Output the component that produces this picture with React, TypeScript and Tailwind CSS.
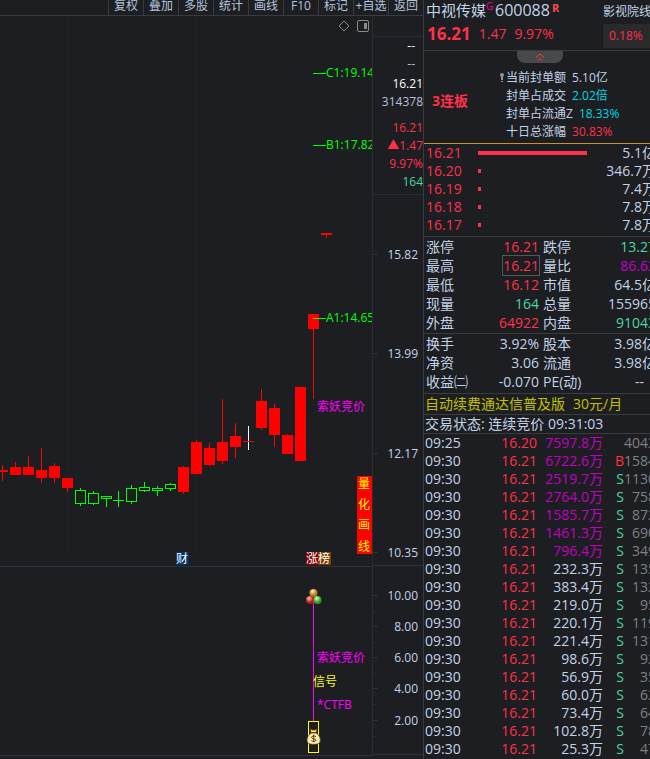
import clsx from 'clsx';

interface Candle {
  x: number;
  top: number;
  bottom: number;
  high: number;
  low: number;
  kind: 'up' | 'down' | 'flat';
}

const toolbar = ['复权', '叠加', '多股', '统计', '画线', 'F10', '标记', '+自选', '返回'];

const c = (x: number, top: number, bottom: number, high: number, low: number, kind: Candle['kind'] = 'up'): Candle => ({
  x, top, bottom, high, low, kind,
});

// y values are measured from the top of the price pane
const candles: Candle[] = [
  c(-3, 454, 456, 449, 465),
  c(10, 451, 459, 446, 459),
  c(23, 451, 459, 440, 459),
  c(36, 454, 462, 432, 467),
  c(49, 450, 462, 447, 467),
  c(62, 462, 472, 462, 476),
  c(75, 474, 488, 472, 490, 'down'),
  c(88, 477, 488, 475, 489, 'down'),
  c(101, 480, 483, 480, 491, 'down'),
  c(113, 484, 485, 475, 491, 'down'),
  c(126, 472, 486, 469, 488, 'down'),
  c(139, 471, 475, 466, 476, 'down'),
  c(152, 472, 475, 470, 480, 'down'),
  c(165, 468, 473, 467, 475, 'down'),
  c(178, 451, 476, 450, 478),
  c(191, 426, 458, 424, 458),
  c(204, 432, 449, 427, 450),
  c(217, 426, 445, 383, 448),
  c(230, 420, 431, 407, 442),
  c(243, 425, 426, 410, 434, 'flat'),
  c(256, 385, 412, 373, 414),
  c(269, 392, 419, 388, 431),
  c(282, 419, 438, 418, 438),
  c(295, 371, 445, 371, 445),
  c(308, 298, 313, 298, 383),
  c(321, 217, 219, 217, 222),
];

const priceTicks = [
  { y: 239, label: '15.82' },
  { y: 338, label: '13.99' },
  { y: 438, label: '12.17' },
  { y: 537, label: '10.35' },
];

const subTicks = [
  { y: 29, label: '10.00' },
  { y: 60, label: '8.00' },
  { y: 91, label: '6.00' },
  { y: 122, label: '4.00' },
  { y: 154, label: '2.00' },
];

const marks = [
  { y: 57, label: 'C1:19.14' },
  { y: 129, label: 'B1:17.82' },
  { y: 302, label: 'A1:14.65' },
];

const sealInfo = [
  { label: '当前封单额', value: '5.10亿', color: 'text-[#c3d3e6]' },
  { label: '封单占成交', value: '2.02倍', color: 'text-[#00d8e0]' },
  { label: '封单占流通Z', value: '18.33%', color: 'text-[#00d8e0]' },
  { label: '十日总涨幅', value: '30.83%', color: 'text-[#ff304a]' },
];

const depth = [
  { price: '16.21', size: 109, volume: '5.1亿' },
  { price: '16.20', size: 3, volume: '346.7万' },
  { price: '16.19', size: 3, volume: '7.4万' },
  { price: '16.18', size: 3, volume: '7.8万' },
  { price: '16.17', size: 3, volume: '7.8万' },
];

const RED = 'text-[#ff304a]';
const GREEN = 'text-[#4bd6a0]';
const PURPLE = 'text-[#c000c0]';
const PLAIN = 'text-[#c3d3e6]';

const quotes = [
  ['涨停', '16.21', RED, '跌停', '13.27', GREEN],
  ['最高', '16.21', RED, '量比', '86.62', PURPLE],
  ['最低', '16.12', RED, '市值', '64.5亿', PLAIN],
  ['现量', '164', GREEN, '总量', '155965', PLAIN],
  ['外盘', '64922', RED, '内盘', '91043', GREEN],
];

const finance = [
  ['换手', '3.92%', PLAIN, '股本', '3.98亿', PLAIN],
  ['净资', '3.06', PLAIN, '流通', '3.98亿', PLAIN],
  ['收益㈡', '-0.070', PLAIN, 'PE(动)', '--', PLAIN],
];

const ticks = [
  ['09:25', '16.20', '7597.8万', '', '4043'],
  ['09:30', '16.21', '6722.6万', 'B', '1584'],
  ['09:30', '16.21', '2519.7万', 'S', '1130'],
  ['09:30', '16.21', '2764.0万', 'S', '758'],
  ['09:30', '16.21', '1585.7万', 'S', '872'],
  ['09:30', '16.21', '1461.3万', 'S', '690'],
  ['09:30', '16.21', '796.4万', 'S', '349'],
  ['09:30', '16.21', '232.3万', 'S', '135'],
  ['09:30', '16.21', '383.4万', 'S', '132'],
  ['09:30', '16.21', '219.0万', 'S', '95'],
  ['09:30', '16.21', '220.1万', 'S', '119'],
  ['09:30', '16.21', '221.4万', 'S', '131'],
  ['09:30', '16.21', '98.6万', 'S', '92'],
  ['09:30', '16.21', '56.9万', 'S', '35'],
  ['09:30', '16.21', '60.0万', 'S', '62'],
  ['09:30', '16.21', '73.4万', 'S', '64'],
  ['09:30', '16.21', '102.8万', 'S', '78'],
  ['09:30', '16.21', '25.3万', 'S', '47'],
];

function CandleShape({ x, top, bottom, high, low, kind }: Candle) {
  const mid = x + 5;
  if (kind === 'down') {
    const h = bottom - top;
    return (
      <g fill="#00ff00">
        {high < top && <rect x={mid} y={high} width="1" height={top - high} />}
        {low > bottom && <rect x={mid} y={bottom} width="1" height={low - bottom} />}
        {h > 1 ? (
          <rect x={x + 0.5} y={top + 0.5} width="10" height={h - 1} fill="none" stroke="#00ff00" />
        ) : (
          <rect x={x} y={top} width="11" height="1" />
        )}
      </g>
    );
  }
  return (
    <g fill="#ff0000">
      <rect x={mid} y={high} width="1" height={low - high} fill={kind === 'flat' ? '#ffffff' : '#ff0000'} />
      <rect x={x} y={top} width="11" height={bottom - top} />
    </g>
  );
}

function PricePane() {
  return (
    <div className="relative border-b border-[#303137]">
      <svg className="block h-[550px] w-full" fontSize="12" shapeRendering="crispEdges">
        {[67, 196].map((x) => (
          <line key={x} x1={x + 0.5} x2={x + 0.5} y1="2" y2="536" stroke="#2c2d32" strokeDasharray="1 3" />
        ))}
        {candles.map((candle) => (
          <CandleShape key={candle.x} {...candle} />
        ))}
        {marks.map((m) => (
          <g key={m.label} fill="#00ff00">
            <rect x="313" y={m.y} width="13" height="1" />
            <text x="326" y={m.y + 4}>{m.label}</text>
          </g>
        ))}
        <text x="317" y="395" fill="#ff00ff">索妖竞价</text>

        <rect x="357" y="460" width="15" height="78" fill="#ff0000" />
        <g fill="#ffff00">
          <text x="358" y="472">量</text>
          <text x="358" y="493">化</text>
          <text x="358" y="513">画</text>
          <text x="358" y="535">线</text>
        </g>

        <rect x="176" y="536" width="13" height="13" fill="#003366" />
        <rect x="306" y="536" width="12" height="13" fill="#800000" />
        <rect x="318" y="536" width="13" height="13" fill="#804000" />
        <g fill="#ffffff">
          <text x="176" y="547">财</text>
          <text x="306" y="547">涨</text>
          <text x="318" y="547">榜</text>
        </g>
      </svg>
      <div className="absolute right-[3px] top-1 flex gap-[7px] text-[#8a8a8a]">
        <button aria-label="指标" type="button">
          <svg width="12" height="12" fill="none" stroke="currentColor">
            <path d="M6 1 11 6 6 11 1 6Z" />
          </svg>
        </button>
        <button aria-label="侧栏" type="button">
          <svg width="12" height="12" fill="none" stroke="currentColor">
            <rect x="0.5" y="0.5" width="11" height="11" rx="1.5" />
            <rect x="7" y="3" width="3" height="6" fill="currentColor" stroke="none" />
          </svg>
        </button>
      </div>
    </div>
  );
}

function SignalPane() {
  return (
    <div className="border-b border-[#303137]">
      <svg className="block h-[188px] w-full" fontSize="12">
        <defs>
          <radialGradient id="gold" cx="0.4" cy="0.3">
            <stop offset="0" stopColor="#fff3c0" />
            <stop offset="1" stopColor="#b07a10" />
          </radialGradient>
          <radialGradient id="red" cx="0.4" cy="0.3">
            <stop offset="0" stopColor="#ffc0b0" />
            <stop offset="1" stopColor="#b81c10" />
          </radialGradient>
          <radialGradient id="green" cx="0.4" cy="0.3">
            <stop offset="0" stopColor="#d8ffc8" />
            <stop offset="1" stopColor="#30a018" />
          </radialGradient>
        </defs>
        <rect x="313" y="34" width="1" height="120" fill="#ff00ff" />
        <circle cx="313.5" cy="26" r="4" fill="url(#gold)" />
        <circle cx="310" cy="33" r="4" fill="url(#red)" />
        <circle cx="317.5" cy="33" r="4" fill="url(#green)" />
        <text x="317" y="95" fill="#ff00ff">索妖竞价</text>
        <text x="313" y="119" fill="#ffff00">信号</text>
        <text x="317" y="142" fill="#ff00ff">*CTFB</text>
        <rect x="308.5" y="154.5" width="10" height="31" fill="none" stroke="#ffff00" />
        <path d="M310.500 162 312.500 163 315 163 317 162 316 166 311 166Z" fill="#ffe040" stroke="#5a3510" strokeWidth="0.5" />
        <path
          d="M311.500 166h4.500C318.500 167.500 320.300 170 320.300 173C320.300 176.300 318 177.300 313.700 177.300C309.300 177.300 307 176.300 307 173C307 170 309 167.500 311.500 166Z"
          fill="#fdf0b0"
          stroke="#6a4018"
          strokeWidth="0.8"
        />
        <path d="M311 165.500h5.500" stroke="#a02810" />
        <path d="M316 169.700c-1-1.200-4.500-1-4.500.6s4.500 1.200 4.500 2.900-3.500 1.700-4.700.4M313.700 167.800v7.400" fill="none" stroke="#5a3510" />
      </svg>
    </div>
  );
}

function AxisColumn() {
  return (
    <div className="w-[51px] shrink-0 border-l border-[#2b2c33]">
      <div className="mt-5 border-y border-[#2b2c33] pb-[3px] text-right text-xs leading-[18px]">
        <p className="pr-2 text-white">--</p>
        <p className="pr-2 text-[#b4c4da]">--</p>
        <div className="mt-0.5">
          <p className="text-white">16.21</p>
          <p className="text-[#b4c4da]">314378</p>
        </div>
        <div className="mt-2 text-[#ff304a]">
          <p>16.21</p>
          <p>▲1.47</p>
          <p>9.97%</p>
          <p className="text-[#4bd6a0]">164</p>
        </div>
      </div>
      <svg className="block h-[371px] w-full" fontSize="12" viewBox="0 180 50 371" preserveAspectRatio="xMinYMin">
        {priceTicks.map((t) => (
          <g key={t.label}>
            <rect x="0" y={t.y} width="5" height="1" fill="#303137" />
            <text x="45" y={t.y + 5} textAnchor="end" fill="#c3d3e6">{t.label}</text>
          </g>
        ))}
        <rect x="0" y="550" width="50" height="1" fill="#303137" />
      </svg>
      <div className="border-b border-[#303137]">
        <svg className="block h-[188px] w-full" fontSize="12">
          {subTicks.map((t) => (
            <g key={t.label}>
              <rect x="0" y={t.y} width="5" height="1" fill="#303137" />
              <rect x="0" y={t.y + 16} width="2" height="1" fill="#303137" />
              <text x="45" y={t.y + 5} textAnchor="end" fill="#c3d3e6">{t.label}</text>
            </g>
          ))}
        </svg>
      </div>
    </div>
  );
}

function StatRows({ rows }: { rows: string[][] }) {
  return (
    <dl>
      {rows.map(([l1, v1, c1, l2, v2, c2]) => (
        <div key={l1} className="flex h-[19px] gap-1 pl-0.5">
          <div className="flex w-[113px] justify-between">
            <dt>{l1}</dt>
            <dd className={clsx(c1, l1 === '最高' && 'outline outline-[#55565a]')}>{v1}</dd>
          </div>
          <div className="flex flex-1 justify-between">
            <dt>{l2}</dt>
            <dd className={clsx(c2, v2 === '--' && 'pr-3')}>{v2}</dd>
          </div>
        </div>
      ))}
    </dl>
  );
}

function QuotePanel() {
  return (
    <aside className="w-[227px] shrink-0 overflow-hidden border-l border-[#3a3b3f] text-sm text-[#c3d3e6]">
      {/* the panel is wider than its slot, the right edge is cut off */}
      <div className="w-[232px]">
        <header className="flex h-[51px] justify-between border-b border-[#3a3b3f]">
          <div className="pl-0.5">
            <h1 className="flex h-5 items-start text-base leading-5">
              <span className="text-[15px]">中视传媒</span>
              <sup className="top-0 w-[9px] text-[10px] leading-3 text-[#e0108c]">G</sup>
              <span>600088</span>
              <span className="pl-0.5 text-[11px] font-bold leading-4 text-[#ff4a4a]">R</span>
            </h1>
            <p className="flex items-center gap-2 pl-px pt-1 leading-5 text-[#ff304a]">
              <b className="text-[17px]">16.21</b>
              <span>1.47</span>
              <span>9.97%</span>
            </p>
          </div>
          <div className="w-[53px] text-xs">
            <p className="h-6 whitespace-nowrap leading-6">影视院线</p>
            <p className="h-6 bg-[#2a2a2c] pl-1.5 leading-6 text-[#ff304a]">0.18%</p>
          </div>
        </header>

        <section className="border-b border-[#c8922e] pb-0.5">
          <button
            type="button"
            aria-label="收起"
            className="mx-auto flex h-3 w-[46px] items-center justify-center rounded-b-lg bg-[#48494b]"
          >
            <svg width="10" height="8" fill="none" stroke="#ff4040">
              <path d="M1 4.500 5 1l4 3.500M3 7.500 5 5.500l2 2" />
            </svg>
          </button>
          <div className="flex items-center pt-1.5">
            <strong className="mb-2 w-[74px] pl-2 text-sm text-[#ff304a]">3连板</strong>
            <svg width="8" height="72" className="shrink-0" fill="#8f9296">
              <circle cx="4" cy="6" r="2" />
              <rect x="3" y="6" width="2" height="5" />
              <rect x="3" y="12" width="2" height="1" />
            </svg>
            <dl className="text-xs leading-[18px]">
              {sealInfo.map((row) => (
                <div key={row.label} className="flex gap-1.5">
                  <dt>{row.label}</dt>
                  <dd className={row.color}>{row.value}</dd>
                </div>
              ))}
            </dl>
          </div>
        </section>

        <section className="border-b border-[#3a3b3f] pb-0.5">
          {depth.map((row) => (
            <div key={row.price} className="flex h-[18px] items-center pl-0.5 leading-[18px]">
              <span className="w-[52px] text-[#ff304a]">{row.price}</span>
              <span className="h-1 bg-[#ff304a]" style={{ width: row.size }} />
              <span className="ml-auto">{row.volume}</span>
            </div>
          ))}
        </section>

        <section className="border-b border-[#3a3b3f] pb-px leading-[19px]">
          <StatRows rows={quotes} />
        </section>
        <section className="border-b border-[#3a3b3f] pb-0.5 leading-[19px]">
          <StatRows rows={finance} />
        </section>

        <p className="flex gap-2 border-b border-[#3a3b3f] pl-px leading-5 text-[#c0c000]">
          <span>自动续费通达信普及版</span>
          <span>30元/月</span>
        </p>
        <p className="border-b border-[#3a3b3f] pl-px leading-[18px]">交易状态: 连续竞价 09:31:03</p>

        <table className="w-full table-fixed text-right leading-[18px]">
          <colgroup>
            <col className="w-[52px]" />
            <col className="w-[61px]" />
            <col className="w-[66px]" />
            <col className="w-[21px]" />
            <col />
          </colgroup>
          <tbody>
            {ticks.map(([time, price, amount, side, count], i) => (
              <tr key={i}>
                <td className="p-0 pl-px text-left">{time}</td>
                <td className="p-0 text-[#ff304a]">{price}</td>
                <td className={clsx('p-0', i < 7 && 'text-[#c000c0]')}>{amount}</td>
                <td className={clsx('p-0', side === 'B' ? 'text-[#ff304a]' : 'text-[#4bd6a0]')}>{side}</td>
                <td className="p-0 text-[#808080]">{count}</td>
              </tr>
            ))}
          </tbody>
        </table>
      </div>
    </aside>
  );
}

export default function App() {
  return (
    <div className="flex min-h-screen overflow-hidden bg-[#1d1e22] font-['Open_Sans','Noto_Sans_CJK_SC',sans-serif]">
      <main className="min-w-0 flex-1">
        <nav className="flex h-4 justify-end border-b border-[#3a3b3f] text-xs leading-3 text-[#b4c4da]">
          {toolbar.map((label) => (
            <button
              key={label}
              type="button"
              className="flex w-[35px] justify-center overflow-hidden whitespace-nowrap border-l border-[#3a3b3f]"
            >
              {label}
            </button>
          ))}
        </nav>
        <div className="flex">
          <div className="min-w-0 flex-1">
            <PricePane />
            <SignalPane />
          </div>
          <AxisColumn />
        </div>
      </main>
      <QuotePanel />
    </div>
  );
}
